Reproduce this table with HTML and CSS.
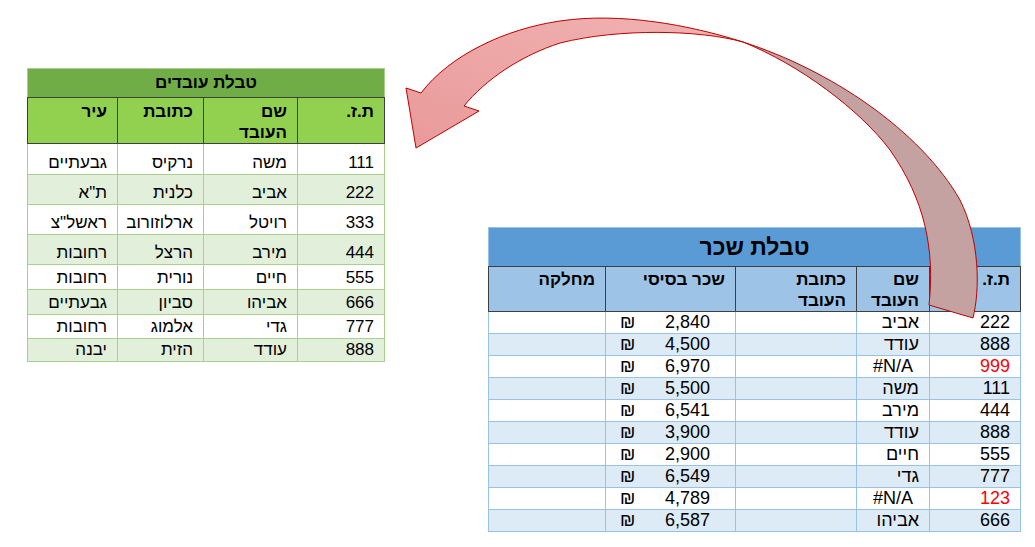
FILE: index.html
```html
<!DOCTYPE html>
<html lang="he">
<head>
<meta charset="utf-8">
<title>טבלאות</title>
<link rel="stylesheet" href="styles.css">
</head>
<body>
<div class="page">
  <table class="sheet employees" dir="rtl">
    <colgroup><col class="e-id"><col class="e-name"><col class="e-addr"><col class="e-city"></colgroup>
    <tr class="title"><th colspan="4">טבלת עובדים</th></tr>
    <tr class="head"><th>ת.ז.</th><th>שם<br>העובד</th><th>כתובת</th><th>עיר</th></tr>
    <tr class="h31"><td>111</td><td>משה</td><td>נרקיס</td><td>גבעתיים</td></tr>
    <tr class="h30 alt"><td>222</td><td>אביב</td><td>כלנית</td><td>ת"א</td></tr>
    <tr class="h30"><td>333</td><td>רויטל</td><td>ארלוזורוב</td><td>ראשל"צ</td></tr>
    <tr class="h30 alt"><td>444</td><td>מירב</td><td>הרצל</td><td>רחובות</td></tr>
    <tr class="h25"><td>555</td><td>חיים</td><td>נורית</td><td>רחובות</td></tr>
    <tr class="h25 alt"><td>666</td><td>אביהו</td><td>סביון</td><td>גבעתיים</td></tr>
    <tr class="h24"><td>777</td><td>גדי</td><td>אלמוג</td><td>רחובות</td></tr>
    <tr class="h23 alt"><td>888</td><td>עודד</td><td>הזית</td><td>יבנה</td></tr>
  </table>

  <table class="sheet salary" dir="rtl">
    <colgroup><col class="s-id"><col class="s-name"><col class="s-addr"><col class="s-pay"><col class="s-dept"></colgroup>
    <tr class="title"><th colspan="5">טבלת שכר</th></tr>
    <tr class="head"><th>ת.ז.</th><th>שם<br>העובד</th><th>כתובת<br>העובד</th><th>שכר בסיסי</th><th>מחלקה</th></tr>
    <tr><td>222</td><td>אביב</td><td></td><td class="pay"><div class="money"><span>₪</span><span>2,840</span></div></td><td></td></tr>
    <tr class="alt"><td>888</td><td>עודד</td><td></td><td class="pay"><div class="money"><span>₪</span><span>4,500</span></div></td><td></td></tr>
    <tr><td class="bad">999</td><td class="err"><span dir="ltr">#N/A</span></td><td></td><td class="pay"><div class="money"><span>₪</span><span>6,970</span></div></td><td></td></tr>
    <tr class="alt"><td>111</td><td>משה</td><td></td><td class="pay"><div class="money"><span>₪</span><span>5,500</span></div></td><td></td></tr>
    <tr><td>444</td><td>מירב</td><td></td><td class="pay"><div class="money"><span>₪</span><span>6,541</span></div></td><td></td></tr>
    <tr class="alt"><td>888</td><td>עודד</td><td></td><td class="pay"><div class="money"><span>₪</span><span>3,900</span></div></td><td></td></tr>
    <tr><td>555</td><td>חיים</td><td></td><td class="pay"><div class="money"><span>₪</span><span>2,900</span></div></td><td></td></tr>
    <tr class="alt"><td>777</td><td>גדי</td><td></td><td class="pay"><div class="money"><span>₪</span><span>6,549</span></div></td><td></td></tr>
    <tr><td class="bad">123</td><td class="err"><span dir="ltr">#N/A</span></td><td></td><td class="pay"><div class="money"><span>₪</span><span>4,789</span></div></td><td></td></tr>
    <tr class="alt"><td>666</td><td>אביהו</td><td></td><td class="pay"><div class="money"><span>₪</span><span>6,587</span></div></td><td></td></tr>
  </table>
</div>

<svg class="arrow" width="1035" height="547" viewBox="0 0 1035 547" aria-hidden="true">
  <defs>
    <linearGradient id="pinkGrad" x1="0" y1="1" x2="1" y2="0">
      <stop offset="0" stop-color="#e99a9a"/>
      <stop offset="1" stop-color="#f1b3b3"/>
    </linearGradient>
  </defs>
  <path class="back" d="M743,42 C830,70 920,130 960,200 C980,240 980,290 973,318 L929,305 C935,250 925,200 890,150 C860,110 800,65 743,42 Z"/>
  <path class="front" fill="url(#pinkGrad)" d="M743,42 C690,25 620,12 560,21 C505,29 450,55 421,93 L406,88 L416,148 L479,111 L464,106 C485,80 520,56 560,43 C620,28 700,30 743,42 Z"/>
</svg>
</body>
</html>
```

FILE: styles.css
```css
* { box-sizing: border-box; }

html, body {
  margin: 0;
  background: #ffffff;
}

body {
  font-family: "Liberation Sans", Arial, "DejaVu Sans", sans-serif;
  color: #000;
  width: 1035px;
  height: 547px;
  overflow: hidden;
  position: relative;
}

.page {
  display: flex;
  align-items: flex-start;
  padding: 68px 0 0 27px;
}

.sheet {
  border-collapse: collapse;
  table-layout: fixed;
}

.sheet td,
.sheet th {
  padding: 0 10px 1px;
  text-align: right;
  vertical-align: bottom;
  white-space: nowrap;
  overflow: hidden;
  font-weight: normal;
}

/* ---------- employees (green) ---------- */
.employees {
  width: 357px;
  font-size: 17px;
}
.employees .e-id { width: 87px; }
.employees .e-name { width: 94px; }
.employees .e-addr { width: 86px; }
.employees .e-city { width: 90px; }

.employees td {
  border: 1px solid #a9d08e;
  line-height: 20px;
  background: #ffffff;
}
.employees tr.alt td { background: #e2efda; }

.employees .title th {
  height: 29px;
  background: #70ad47;
  border: 1px solid #a9d08e;
  border-bottom: 1px solid #3f3f3f;
  text-align: center;
  vertical-align: middle;
  font-weight: bold;
  font-size: 17px;
  padding: 0;
}
.employees .head th {
  height: 45px;
  background: #92d050;
  border: 1px solid #3f3f3f;
  vertical-align: top;
  font-weight: bold;
  line-height: 21px;
  padding: 3px 10px 0;
}

.h31 td { height: 31px; }
.h30 td { height: 30px; }
.h25 td { height: 25px; }
.h24 td { height: 24px; }
.h23 td { height: 23px; }

/* ---------- salary (blue) ---------- */
.salary {
  width: 532px;
  margin: 159px 0 0 103px;
  font-size: 18px;
}
.salary .s-id { width: 91px; }
.salary .s-name { width: 73px; }
.salary .s-addr { width: 121px; }
.salary .s-pay { width: 130px; }
.salary .s-dept { width: 117px; }

.salary td {
  height: 22px;
  line-height: 20px;
  border: 1px solid #9bc2e6;
  background: #ffffff;
}
.salary tr.alt td { background: #ddebf7; }

.salary .title th {
  height: 39px;
  background: #5b9bd5;
  border: 1px solid #9bc2e6;
  border-bottom: 1px solid #3f3f3f;
  text-align: center;
  vertical-align: middle;
  font-weight: bold;
  font-size: 23px;
  padding: 0;
}
.salary .head th {
  height: 42px;
  background: #9dc3e6;
  border: 1px solid #3f3f3f;
  vertical-align: top;
  font-weight: bold;
  font-size: 17px;
  line-height: 21px;
  padding: 2px 10px 0;
}

.salary td.bad { color: #ff0000; }
.salary td.err { text-align: center; padding: 0 0 1px; }

.salary td.pay { padding: 0 25px 1px 14px; }
.money {
  display: flex;
  direction: ltr;
  justify-content: space-between;
  align-items: flex-end;
}

/* ---------- arrow overlay ---------- */
.arrow {
  position: absolute;
  left: 0;
  top: 0;
  pointer-events: none;
}
.arrow .back {
  fill: #c4a2a2;
  stroke: #c00000;
  stroke-width: 1;
}
.arrow .front {
  stroke: #c00000;
  stroke-width: 1;
}
```
